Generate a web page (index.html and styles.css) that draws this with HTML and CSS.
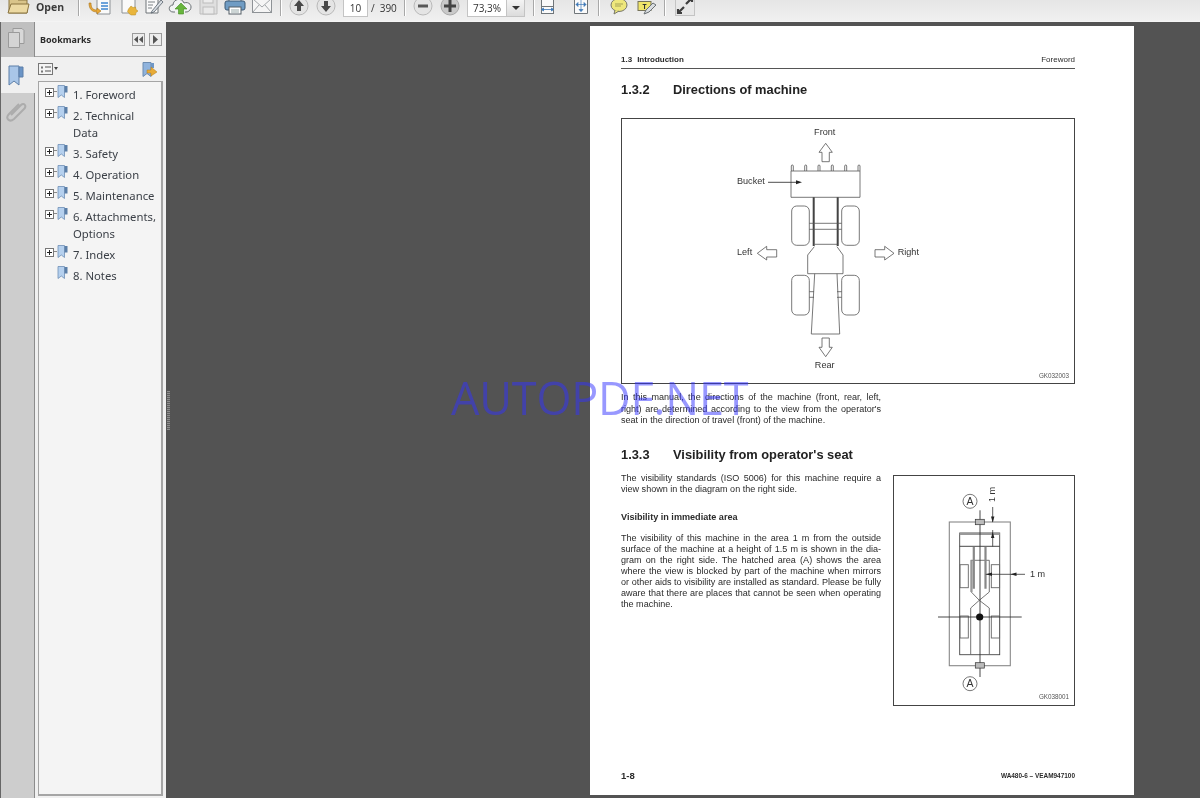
FILE: index.html
```html
<!DOCTYPE html>
<html lang="en">
<head>
<meta charset="utf-8">
<title>AUTOPDF.NET</title>
<link rel="stylesheet" href="styles.css">
</head>
<body>
<div class="app">
  <header class="toolbar">
    <span class="slot folder"><svg viewBox="0 0 26 22" width="26" height="22"><path d="M4 19V3h7l2 3h9v13z" fill="#d9c48a" stroke="#8a7440"/><path d="M3 19l3-9h18l-2 9z" fill="#ecd9a2" stroke="#8a7440"/></svg></span>
    <span class="open-label">Open</span>
    <span class="sep sep-first"></span>
    <span class="slot"><svg viewBox="0 0 26 22" width="26" height="22"><path d="M10 1h9l4 4v15H10z" fill="#fafafa" stroke="#8d9296"/><path d="M14 9h7M14 12h7M14 15h7" stroke="#3f86d0" stroke-width="1.5"/><path d="M4 9c0 5 2 7 6 7v-2l4 3-4 3v-2c-5 0-8-3-8-9z" fill="#e8a735" stroke="#a8741c" stroke-width=".6"/></svg></span>
    <span class="slot"><svg viewBox="0 0 26 22" width="26" height="22"><path d="M8 3h10l3 3v13H8z" fill="#fafafa" stroke="#8d9296"/><rect x="5" y="2" width="11" height="4" fill="#d9413a"/><path d="M17 12l2 1.500 2.500-.5.500 2.500 2 1.500-2 1.500-.5 2.500H17l-2-1.500-1.500-2 1-2.500z" fill="#e9b53c" stroke="#b58a20" stroke-width=".5"/></svg></span>
    <span class="slot"><svg viewBox="0 0 26 22" width="26" height="22"><path d="M5 4h12v15H5z" fill="#fafafa" stroke="#6f7478"/><path d="M7 8h7M7 11h5M7 14h4" stroke="#7d8286"/><path d="M11 17l9-11 2 2-9 10-3 1z" fill="#d8dde2" stroke="#55606a" stroke-width=".8"/></svg></span>
    <span class="slot"><svg viewBox="0 0 26 22" width="26" height="22"><path d="M7 18H5c-5 0-5-7 0-7 0-6 9-8 11-2 5-2 9 3 6 7-1 1-2 2-4 2h-1" fill="#f1f3f4" stroke="#6a7074"/><path d="M13 9l6 6h-3.500v5h-5v-5H7z" fill="#67b53d" stroke="#3f8a20" stroke-width=".6"/></svg></span>
    <span class="slot faded"><svg viewBox="0 0 26 22" width="26" height="22"><path d="M5 3h14l3 3v14H5z" fill="#dedede" stroke="#b5b5b5"/><rect x="8" y="3" width="10" height="6" fill="#eee" stroke="#b5b5b5"/><rect x="8" y="13" width="11" height="7" fill="#e9e9e9" stroke="#b5b5b5"/></svg></span>
    <span class="slot"><svg viewBox="0 0 26 22" width="26" height="22"><rect x="7" y="2" width="12" height="6" fill="#fff" stroke="#555e66"/><rect x="3" y="7" width="20" height="9" rx="2" fill="#6f9cc4" stroke="#3c5a76"/><rect x="7" y="13" width="12" height="7" fill="#fff" stroke="#555e66"/><path d="M9 16h8M9 18h8" stroke="#9aa"/></svg></span>
    <span class="slot"><svg viewBox="0 0 26 22" width="26" height="22"><rect x="3.500" y="4.500" width="19" height="14" fill="#f5f5f5" stroke="#8e9296"/><path d="M4 5l9 8 9-8M4 18l6-7M22 18l-6-7" fill="none" stroke="#a3a7aa"/></svg></span>
    <span class="sep sep-nav"></span>
    <span class="round"><svg viewBox="0 0 20 20" width="20" height="20"><circle cx="10" cy="10" r="9" fill="#e4e4e4" stroke="#b9b9b9"/><path d="M10 4l5 6h-3v5H8v-5H5z" fill="#484848"/></svg></span>
    <span class="round round-next"><svg viewBox="0 0 20 20" width="20" height="20"><circle cx="10" cy="10" r="9" fill="#e4e4e4" stroke="#b9b9b9"/><path d="M10 16l5-6h-3V5H8v5H5z" fill="#484848"/></svg></span>
    <span class="field field-page">10</span>
    <span class="page-total"><i class="slash">/</i>390</span>
    <span class="sep sep-zoom"></span>
    <span class="round round-minus"><svg viewBox="0 0 20 20" width="20" height="20"><circle cx="10" cy="10" r="9" fill="#e4e4e4" stroke="#b9b9b9"/><rect x="5" y="8.500" width="10" height="3" fill="#585858"/></svg></span>
    <span class="round round-plus"><svg viewBox="0 0 20 20" width="20" height="20"><circle cx="10" cy="10" r="9" fill="#c9c9c9" stroke="#a9a9a9"/><path d="M8.500 4h3v4.500H16v3h-4.500V16h-3v-4.500H4v-3h4.500z" fill="#444"/></svg></span>
    <span class="field field-zoom"><span class="zoom-value">73,3%</span><span class="zoom-arrow"></span></span>
    <span class="sep sep-fit"></span>
    <span class="slot slot-fit"><svg viewBox="0 0 26 22" width="26" height="22"><rect x="7.500" y="2.500" width="12" height="10" fill="#fafafa" stroke="#70767a"/><rect x="7.500" y="12.500" width="12" height="7" fill="#fafafa" stroke="#70767a"/><path d="M7.500 15.500h12M7.500 15.500l2-1.500v3zM19.500 15.500l-2-1.500v3z" fill="#3d78b8" stroke="#3d78b8" stroke-width=".8"/></svg></span>
    <span class="slot slot-page"><svg viewBox="0 0 26 22" width="26" height="22"><path d="M6.500 1.500h10l3 3v15h-13z" fill="#fafafa" stroke="#70767a"/><path d="M13 3.500v14M8 10.500h10M13 3.500l-2 2h4zM13 17.500l-2-2h4zM8 10.500l2-2v4zM18 10.500l-2-2v4z" fill="#3d78b8" stroke="#3d78b8" stroke-width=".7"/></svg></span>
    <span class="sep sep-note"></span>
    <span class="slot slot-note"><svg viewBox="0 0 26 22" width="26" height="22"><ellipse cx="13" cy="11" rx="8" ry="6.500" fill="#eee77c" stroke="#77776a"/><path d="M9 16l-1 4 5-3" fill="#eee77c" stroke="#77776a"/><path d="M9 10h8M9 12h6" stroke="#a5a257"/></svg></span>
    <span class="slot"><svg viewBox="0 0 26 22" width="26" height="22"><rect x="5" y="7.500" width="13" height="9" fill="#f0e56a" stroke="#77745a"/><text class="icon-t" x="11.500" y="15" text-anchor="middle">T</text><path d="M11 20l2-4 7-7 3 2-7 7z" fill="#d8dce0" stroke="#6a7074"/></svg></span>
    <span class="sep sep-expand"></span>
    <span class="expand"><svg viewBox="0 0 20 22" width="20" height="22"><rect x=".5" y="2.500" width="19" height="19" fill="#e8e8e8" stroke="#c4c4c4"/><path d="M11 10l5-5M13 4h4v4M9 13l-5 5M7 19H3v-4" fill="none" stroke="#3e3e3e" stroke-width="2.200"/></svg></span>
  </header>

  <div class="main">
    <nav class="rail">
      <div class="rail-pages"><svg viewBox="0 0 20 22" width="20" height="22"><path d="M7 1.500h9l2 2v13H7z" fill="#d8d8d8" stroke="#9a9a9a"/><path d="M2.500 5.500h11v15h-11z" fill="#d4d4d4" stroke="#9a9a9a"/></svg></div>
      <div class="rail-marks"><svg viewBox="0 0 18 22" width="18" height="22"><path d="M2 2h10v19l-5-4-5 4z" fill="#a9c6e8" stroke="#5c7fa8"/><path d="M12 3h4v10h-4z" fill="#6a94c6" stroke="#5c7fa8"/></svg></div>
      <div class="rail-clip"><svg viewBox="0 0 22 22" width="22" height="22"><path d="M6 15L16 5c3-3 6 1 3 4L9 19c-5 4-9-1-5-5L14 4" fill="none" stroke="#acacac" stroke-width="2"/></svg></div>
    </nav>

    <aside class="panel">
      <div class="panel-head">
        <span class="panel-title">Bookmarks</span>
        <span class="mini"><svg viewBox="0 0 9 9" width="9" height="9"><path d="M4 1L0 4.500 4 8zM9 1L5 4.500 9 8z" fill="#555"/></svg></span>
        <span class="mini"><svg viewBox="0 0 9 9" width="9" height="9"><path d="M2 0l5 4.500L2 9z" fill="#555"/></svg></span>
      </div>
      <div class="panel-tools">
        <span class="opts"><svg viewBox="0 0 20 12" width="20" height="12"><rect x=".5" y=".5" width="14" height="11" fill="#f4f4f4" stroke="#777"/><path d="M3 3.500h2v2H3zM3 7.500h2v2H3z" fill="#777"/><path d="M7 4h6M7 8h6" stroke="#555"/><path d="M16 4h4l-2 3z" fill="#444"/></svg></span>
        <span class="find"><svg viewBox="0 0 16 15" width="16" height="15"><path d="M1 .5h8v14l-4-3-4 3z" fill="#8fb3dd" stroke="#6d8cb0"/><path d="M9 1h3v5H9z" fill="#6f97c6"/><path d="M5 8h4V5l6 5-6 4v-3H5z" fill="#e8ab36" stroke="#b07c1c" stroke-width=".5"/></svg></span>
      </div>
      <ul class="tree">
        <li class="node"><span class="plus"></span><svg class="mark" viewBox="0 0 11 13" width="11" height="13"><path d="M1 .5h6.500v12l-3.200-2.500L1 12.500z" fill="#b5d0ee" stroke="#6e8fb6" stroke-width=".8"/><path d="M7.500 1H10.500v6.500h-3z" fill="#5b7fa8"/></svg><span class="label">1. Foreword</span></li>
        <li class="node"><span class="plus"></span><svg class="mark" viewBox="0 0 11 13" width="11" height="13"><path d="M1 .5h6.500v12l-3.200-2.500L1 12.500z" fill="#b5d0ee" stroke="#6e8fb6" stroke-width=".8"/><path d="M7.500 1H10.500v6.500h-3z" fill="#5b7fa8"/></svg><span class="label">2. Technical Data</span></li>
        <li class="node"><span class="plus"></span><svg class="mark" viewBox="0 0 11 13" width="11" height="13"><path d="M1 .5h6.500v12l-3.200-2.500L1 12.500z" fill="#b5d0ee" stroke="#6e8fb6" stroke-width=".8"/><path d="M7.500 1H10.500v6.500h-3z" fill="#5b7fa8"/></svg><span class="label">3. Safety</span></li>
        <li class="node"><span class="plus"></span><svg class="mark" viewBox="0 0 11 13" width="11" height="13"><path d="M1 .5h6.500v12l-3.200-2.500L1 12.500z" fill="#b5d0ee" stroke="#6e8fb6" stroke-width=".8"/><path d="M7.500 1H10.500v6.500h-3z" fill="#5b7fa8"/></svg><span class="label">4. Operation</span></li>
        <li class="node"><span class="plus"></span><svg class="mark" viewBox="0 0 11 13" width="11" height="13"><path d="M1 .5h6.500v12l-3.200-2.500L1 12.500z" fill="#b5d0ee" stroke="#6e8fb6" stroke-width=".8"/><path d="M7.500 1H10.500v6.500h-3z" fill="#5b7fa8"/></svg><span class="label">5. Maintenance</span></li>
        <li class="node"><span class="plus"></span><svg class="mark" viewBox="0 0 11 13" width="11" height="13"><path d="M1 .5h6.500v12l-3.200-2.500L1 12.500z" fill="#b5d0ee" stroke="#6e8fb6" stroke-width=".8"/><path d="M7.500 1H10.500v6.500h-3z" fill="#5b7fa8"/></svg><span class="label">6. Attachments, Options</span></li>
        <li class="node"><span class="plus"></span><svg class="mark" viewBox="0 0 11 13" width="11" height="13"><path d="M1 .5h6.500v12l-3.200-2.500L1 12.500z" fill="#b5d0ee" stroke="#6e8fb6" stroke-width=".8"/><path d="M7.500 1H10.500v6.500h-3z" fill="#5b7fa8"/></svg><span class="label">7. Index</span></li>
        <li class="node"><span class="plus-none"></span><svg class="mark" viewBox="0 0 11 13" width="11" height="13"><path d="M1 .5h6.500v12l-3.200-2.500L1 12.500z" fill="#b5d0ee" stroke="#6e8fb6" stroke-width=".8"/><path d="M7.500 1H10.500v6.500h-3z" fill="#5b7fa8"/></svg><span class="label">8. Notes</span></li>
      </ul>
    </aside>

    <main class="viewer">
      <span class="grip"></span>
      <article class="page">
        <div class="page-head"><b class="sec"><span class="sec-no">1.3</span>Introduction</b><span>Foreword</span></div>
        <h2 class="heading heading-a"><span class="h-no">1.3.2</span>Directions of machine</h2>
        <figure class="fig fig-a">
          <svg viewBox="0 0 454 266" width="454" height="266">
            <g fill="none" stroke="#555" stroke-width=".8">
              <path d="M170 53h69v26.300h-69z"/>
              <path d="M170.300 53v-5a1 1 0 0 1 2 0v5M183.700 53v-5a1 1 0 0 1 2 0v5M197 53v-5a1 1 0 0 1 2 0v5M210.300 53v-5a1 1 0 0 1 2 0v5M223.700 53v-5a1 1 0 0 1 2 0v5M237 53v-5a1 1 0 0 1 2 0v5"/>
              <path d="M192.700 79.300V128M216.700 79.300V128" stroke-width="2" stroke="#444"/>
              <path d="M188.300 105.300h32.400M188.300 111.300h32.400M193.500 126.300h23"/>
              <rect x="170.700" y="88" width="17.600" height="39.300" rx="5"/>
              <rect x="220.700" y="88" width="17.600" height="39.300" rx="5"/>
              <rect x="170.700" y="157.300" width="17.600" height="39.700" rx="5"/>
              <rect x="220.700" y="157.300" width="17.600" height="39.700" rx="5"/>
              <path d="M193.300 128.700L186.700 137v18.700H222V137l-6-8.300"/>
              <path d="M193.700 155.700L190.300 216h28.400L216 155.700"/>
              <path d="M188.300 173.700h4.700M188.300 179.300h4.700M216 173.700h4.700M216 179.300h4.700"/>
              <path d="M204.700 25.300l6.600 9H208.300v9.400h-7.300v-9.400h-3z"/>
              <path d="M201 220h7.300v9.300h3l-6.600 9.400-6.700-9.400h3z"/>
              <path d="M136.300 135.300l9.400-7v3.400h10v7.300h-10v3z"/>
              <path d="M273 135.300l-9.300-7v3.400h-9.700v7.300h9.700v3z"/>
              <path d="M147 64.300h28" stroke="#222"/>
            </g>
            <path d="M181 64.300l-6-2v4z" fill="#222"/>
            <text class="lbl" x="203.700" y="17" text-anchor="middle">Front</text>
            <text class="lbl" x="116" y="66">Bucket</text>
            <text class="lbl" x="116" y="137">Left</text>
            <text class="lbl" x="276.700" y="137">Right</text>
            <text class="lbl" x="203.700" y="249.500" text-anchor="middle">Rear</text>
            <text class="code" x="448" y="260" text-anchor="end">GK032003</text>
          </svg>
        </figure>
        <div class="para para-a">
          <span class="ln">In this manual, the directions of the machine (front, rear, left,</span>
          <span class="ln">right) are determined according to the view from the operator's</span>
          <span class="ln end">seat in the direction of travel (front) of the machine.</span>
        </div>
        <h2 class="heading heading-b"><span class="h-no">1.3.3</span>Visibility from operator's seat</h2>
        <div class="split">
          <div class="col">
            <div class="para">
              <span class="ln">The visibility standards (ISO 5006) for this machine require a</span>
              <span class="ln end">view shown in the diagram on the right side.</span>
            </div>
            <h3 class="sub">Visibility in immediate area</h3>
            <div class="para">
              <span class="ln">The visibility of this machine in the area 1 m from the outside</span>
              <span class="ln">surface of the machine at a height of 1.5 m is shown in the dia-</span>
              <span class="ln">gram on the right side. The hatched area (A) shows the area</span>
              <span class="ln">where the view is blocked by part of the machine when mirrors</span>
              <span class="ln">or other aids to visibility are installed as standard. Please be fully</span>
              <span class="ln">aware that there are places that cannot be seen when operating</span>
              <span class="ln end">the machine.</span>
            </div>
          </div>
          <figure class="fig fig-b">
            <svg viewBox="0 0 182 231" width="182" height="231">
              <g fill="none" stroke="#666" stroke-width=".9">
                <rect x="56.300" y="47" width="61" height="143.700" stroke="#888" stroke-width="1.100"/>
                <rect x="66.700" y="58" width="40" height="121.700" stroke="#444"/>
                <path d="M66.700 59h40" stroke="#999" stroke-width="2"/>
                <path d="M66.700 71.300h40" stroke="#333"/>
                <rect x="67" y="89.700" width="8.300" height="23"/>
                <rect x="98.300" y="89.700" width="8.300" height="23"/>
                <rect x="67" y="141" width="8.300" height="22"/>
                <rect x="98.300" y="141" width="8.300" height="22"/>
                <path d="M78.300 85.300V117l8 8.300 10-8.300V85.300H77.700"/>
                <path d="M78.500 85.300V117" stroke="#999" stroke-width="2.200"/>
                <path d="M80.800 72v41.700M92.500 72v41.700" stroke="#888" stroke-width="2.200"/>
                <path d="M86.300 125.300l-8.600 7.700v46.700M86.300 125.300l10 7.700v46.700"/>
                <path d="M87 35.300V202M45 142h83.700" stroke="#333"/>
                <path d="M99.700 32v15M99.700 55v16.500M92.700 99.300H132" stroke="#333" stroke-width=".8"/>
              </g>
              <path d="M99.700 47.500l-1.700-6h3.400zM99.700 57l-1.700 6h3.400zM93 99.300l6-1.700v3.400zM117.500 99.300l6-1.700v3.400z" fill="#222"/>
              <g fill="#bbb" stroke="#333" stroke-width=".7">
                <rect x="82.300" y="44.300" width="9" height="5.400"/>
                <rect x="82.300" y="187.700" width="9" height="5.400"/>
              </g>
              <circle cx="86.700" cy="142" r="3.600" fill="#111"/>
              <g fill="#fff" stroke="#555" stroke-width=".8">
                <circle cx="77" cy="26.300" r="7"/>
                <circle cx="77" cy="208.700" r="7"/>
              </g>
              <text class="lbl lbl-big" x="77" y="30" text-anchor="middle">A</text>
              <text class="lbl lbl-big" x="77" y="212.400" text-anchor="middle">A</text>
              <text class="lbl" transform="translate(101.500 27) rotate(-90)">1 m</text>
              <text class="lbl" x="137" y="101.500">1 m</text>
              <text class="code" x="176" y="223.500" text-anchor="end">GK038001</text>
            </svg>
          </figure>
        </div>
        <footer class="page-foot"><b class="foot-no">1-8</b><b class="foot-id">WA480-6 – VEAM947100</b></footer>
      </article>
      <div class="mark-text">AUTOPDF.NET</div>
    </main>
  </div>
</div>
</body>
</html>
```

FILE: styles.css
```css
* { box-sizing: border-box; }
html, body { margin: 0; height: 100%; overflow: hidden; }
body { font-family: "Liberation Sans", Arial, sans-serif; background: #535353; }
.app { width: 1200px; height: 798px; display: flex; flex-direction: column; filter: blur(.35px); }

/* toolbar */
.toolbar { height: 22px; flex: none; display: flex; align-items: flex-end; overflow: hidden; padding: 0 0 5px 5px; background: linear-gradient(#e6e6e6, #f0f0f0); border-bottom: 1px solid #f4f4f4; font-family: "Open Sans", sans-serif; color: #333; }
.toolbar svg { display: block; }
.slot { flex: none; width: 27px; display: flex; justify-content: center; }
.faded { opacity: .85; }
.folder { width: 26px; }
.open-label { width: 42px; margin-left: 5px; align-self: center; font-size: 10.500px; font-weight: 700; color: #3a3a3a; margin-top: -2px; }
.sep { flex: none; width: 2px; height: 20px; background: linear-gradient(90deg, #a8a8a8 50%, #fff 50%); }
.sep-first { margin-right: 6px; }
.sep-nav { margin-left: 5px; margin-right: 7px; }
.round { flex: none; width: 20px; }
.round-next { margin-left: 7px; }
.field { flex: none; height: 18px; background: #fff; border: 1px solid #c4c4c4; font-size: 10px; display: flex; align-items: center; margin-bottom: -1px; }
.field-page { width: 25px; margin-left: 7px; justify-content: center; }
.page-total { flex: none; width: 36px; font-size: 10px; line-height: 16px; white-space: nowrap; }
.slash { font-style: normal; margin: 0 5px 0 3px; }
.sep-zoom { margin-right: 7px; }
.round-plus { margin-left: 7px; }
.field-zoom { width: 58px; margin-left: 7px; }
.zoom-value { flex: 1; text-align: center; }
.zoom-arrow { width: 18px; height: 16px; background: linear-gradient(#f4f4f4, #dcdcdc); border-left: 1px solid #c4c4c4; position: relative; }
.zoom-arrow::after { content: ""; position: absolute; left: 5px; top: 6px; border: 4px solid transparent; border-top-color: #333; border-bottom: 0; }
.sep-fit { margin-left: 8px; }
.slot-fit { margin-left: -2px; }
.slot-page { margin-left: 7px; }
.sep-note { margin-left: 4px; }
.slot-note { margin-left: 5px; }
.sep-expand { margin-left: 5px; }
.expand { flex: none; margin-left: 9px; }

/* layout */
.main { flex: 1; min-height: 0; display: flex; }

/* rail */
.rail { flex: none; width: 35px; background: #cdcdcd; border-left: 1px solid #666; border-right: 1px solid #8c8c8c; display: flex; flex-direction: column; }
.rail-pages { height: 35px; background: #c0c0c0; display: flex; align-items: center; justify-content: center; padding: 0 3px 3px 0; }
.rail-marks { height: 36px; background: #f0f0f0; margin-right: -1px; display: flex; align-items: center; justify-content: center; padding-right: 4px; }
.rail-clip { height: 36px; display: flex; align-items: center; justify-content: center; padding-right: 3px; }
.rail svg { display: block; }

/* panel */
.panel { flex: none; width: 131px; background: #f0f0f0; display: flex; flex-direction: column; padding: 0 3px 2px 3px; }
.panel-head { height: 35px; margin: 0 -3px; padding: 0 4px 0 5px; display: flex; align-items: center; gap: 4px; border-bottom: 1px solid #a8a8a8; }
.panel-title { flex: 1; font-family: "Noto Sans", sans-serif; font-weight: 700; font-size: 9px; color: #2c2c2c; }
.mini { width: 13px; height: 13px; border: 1px solid #9b9b9b; background: #ececec; display: flex; align-items: center; justify-content: center; }
.panel-tools { height: 24px; padding: 0 5px 0 0; display: flex; align-items: center; justify-content: space-between; }
.panel-tools svg { display: block; }
.tree { flex: 1; list-style: none; margin: 0; padding: 2px 0 0 6px; background: #f4f4f4; border: 1px solid #a5a5a5; border-right-width: 2px; border-bottom-width: 2px; font-family: "Noto Sans", sans-serif; color: #3a3f46; }
.node { display: flex; align-items: flex-start; padding: 2px 0; position: relative; }
.plus { flex: none; width: 12px; height: 7px; margin-top: 2px; position: relative; background: linear-gradient(#8a8a8a, #8a8a8a) right center / 5px 1px no-repeat; }
.plus::before { content: ""; position: absolute; left: 0; top: 0; width: 7px; height: 7px; border: 1px solid #777; background: linear-gradient(#222, #222) center / 5px 1px no-repeat, linear-gradient(#222, #222) center / 1px 5px no-repeat, #fff; }
.plus-none { flex: none; width: 12px; }
.mark { flex: none; display: block; margin-top: -1px; }
.label { margin-left: 5px; font-size: 11.300px; line-height: 17px; }

/* viewer */
.viewer { flex: 1; min-width: 0; position: relative; background: #535353; padding: 4px 0 0 424px; }
.grip { position: absolute; left: 1px; top: 369px; width: 3px; height: 39px; background: repeating-linear-gradient(#8e8e8e 0 1px, #5f5f5f 1px 2px); }
.mark-text { position: absolute; left: 285px; top: 346px; font-family: "Open Sans", sans-serif; font-size: 45px; line-height: 60px; color: rgba(50, 50, 255, .5); letter-spacing: -.2px; white-space: nowrap; }

/* pdf page */
.page { width: 544px; height: 769px; background: #fff; padding: 28px 59px 0 31px; color: #2b2b2b; font-size: 9.050px; display: flex; flex-direction: column; }
.page-head { display: flex; justify-content: space-between; height: 15px; line-height: 10px; padding-top: 1px; border-bottom: 1px solid #555; font-size: 8px; }
.sec-no { margin-right: 5px; }
.heading { margin: 0; font-size: 12.850px; line-height: 16px; font-weight: 700; color: #222; }
.h-no { display: inline-block; width: 52px; }
.heading-a { margin-top: 13px; }
.fig { margin: 0; border: 1px solid #444; }
.fig svg { display: block; margin: -1px; }
.fig-a { width: 454px; height: 266px; margin-top: 20px; }
.lbl { font-size: 9.100px; fill: #333; }
.lbl-big { font-size: 10.500px; }
.code { font-size: 6.300px; fill: #555; }
.icon-t { font-size: 7px; font-weight: 700; fill: #333; }
.para { width: 260px; line-height: 11.100px; }
.para-a { margin-top: 8px; line-height: 11.500px; }
.ln { display: block; text-align: justify; text-align-last: justify; white-space: nowrap; }
.ln.end { text-align-last: left; }
.heading-b { margin-top: 20px; }
.split { display: flex; justify-content: space-between; margin-top: 10px; align-items: flex-start; }
.col { width: 260px; }
.sub { margin: 17px 0 10px; font-size: 9.100px; line-height: 11px; font-weight: 700; }
.fig-b { width: 182px; height: 231px; margin-top: 2px; }
.page-foot { margin-top: auto; height: 25px; display: flex; justify-content: space-between; align-items: flex-start; }
.foot-no { font-size: 9.500px; line-height: 12px; }
.foot-id { font-size: 6.450px; line-height: 12px; }
```
